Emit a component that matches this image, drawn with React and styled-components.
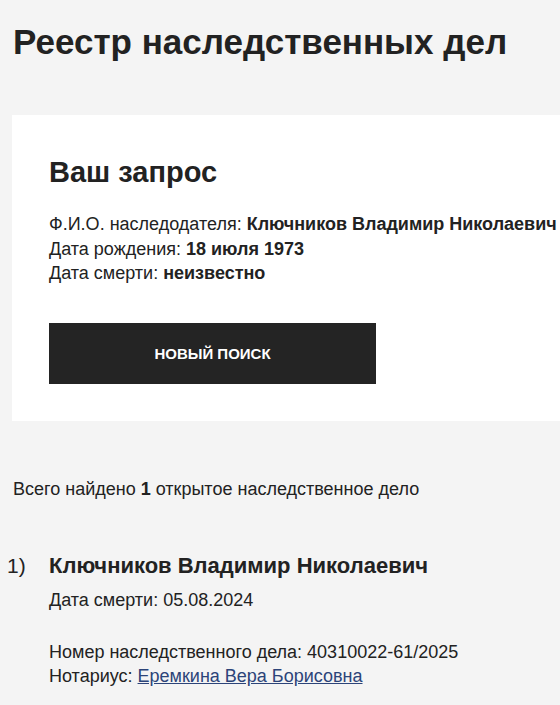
import React from "react";
import styled, { createGlobalStyle } from "styled-components";

const Global = createGlobalStyle`
  html, body { margin: 0; padding: 0; background: #f4f4f4; }
  body { font-family: "Liberation Sans", Arial, sans-serif; color: #222; overflow: hidden; }
`;

const Page = styled.div`
  display: flex;
  flex-direction: column;
  padding: 22px 0 0 12px;
`;

const Title = styled.h1`
  margin: 0 0 0 1px;
  font-size: 35px;
  line-height: 40px;
  font-weight: 700;
  color: #222;
`;

const Card = styled.section`
  margin-top: 53px;
  background: #fff;
  padding: 41px 0 37px 37px;
  display: flex;
  flex-direction: column;
  white-space: nowrap;
`;

const CardTitle = styled.h2`
  margin: 0;
  font-size: 29px;
  line-height: 32px;
  font-weight: 700;
`;

const Info = styled.div`
  margin-top: 24px;
  display: flex;
  flex-direction: column;
  font-size: 18px;
  line-height: 24.5px;
`;

const Button = styled.button`
  margin-top: 37px;
  width: 327px;
  height: 61px;
  border: none;
  background: #242424;
  color: #fff;
  font-family: inherit;
  font-size: 15px;
  font-weight: 700;
  text-transform: uppercase;
  cursor: pointer;
`;

const Summary = styled.p`
  margin: 56px 0 0 1px;
  font-size: 18px;
  line-height: 24px;
`;

const Item = styled.div`
  margin-top: 50px;
  display: grid;
  grid-template-columns: 37px 1fr;
`;

const Num = styled.span`
  font-size: 21px;
  line-height: 30px;
  margin-left: -5px;
`;

const ItemBody = styled.div`
  display: flex;
  flex-direction: column;
`;

const Name = styled.div`
  font-size: 22px;
  line-height: 30px;
  font-weight: 700;
`;

const Line = styled.div`
  font-size: 18px;
  line-height: 24px;
  margin-top: ${(p) => p.$gap || 0}px;
`;

const Link = styled.a`
  color: #2c4479;
  text-decoration: underline;
`;

export default function App() {
  return (
    <>
      <Global />
      <Page>
        <Title>Реестр наследственных дел</Title>
        <Card>
          <CardTitle>Ваш запрос</CardTitle>
          <Info>
            <div>Ф.И.О. наследодателя: <b>Ключников Владимир Николаевич</b></div>
            <div>Дата рождения: <b>18 июля 1973</b></div>
            <div>Дата смерти: <b>неизвестно</b></div>
          </Info>
          <Button>Новый поиск</Button>
        </Card>
        <Summary>Всего найдено <b>1</b> открытое наследственное дело</Summary>
        <Item>
          <Num>1)</Num>
          <ItemBody>
            <Name>Ключников Владимир Николаевич</Name>
            <Line $gap={7}>Дата смерти: 05.08.2024</Line>
            <Line $gap={28}>Номер наследственного дела: 40310022-61/2025</Line>
            <Line>Нотариус: <Link href="#">Еремкина Вера Борисовна</Link></Line>
          </ItemBody>
        </Item>
      </Page>
    </>
  );
}
